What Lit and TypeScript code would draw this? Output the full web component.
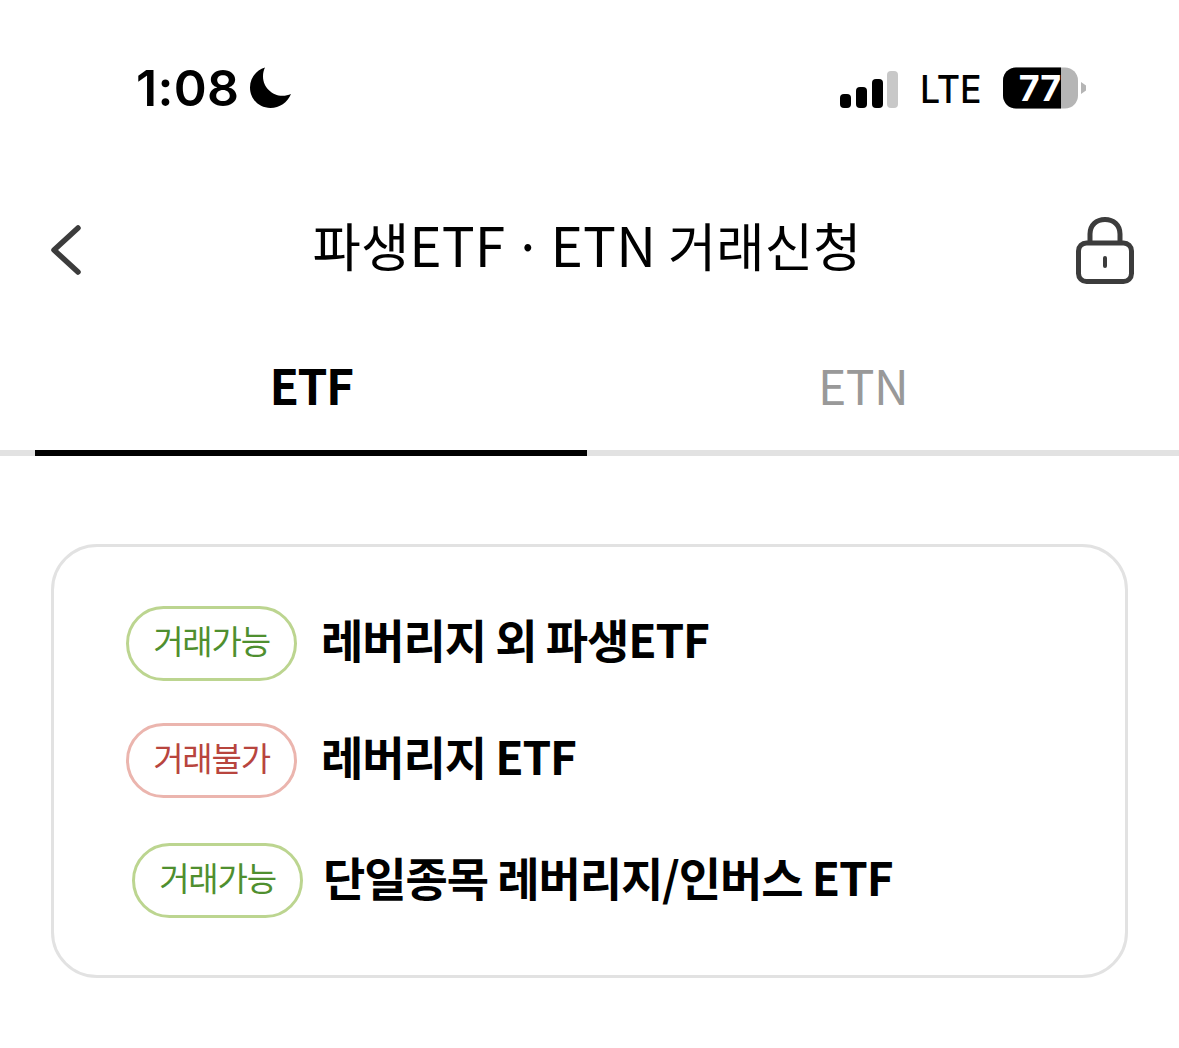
// app.ts
// Derivative ETF / ETN trading permission screen

import { LitElement, html, css } from "lit";

const rows = [
  { ok: true, label: "레버리지 외 파생ETF", shifted: false },
  { ok: false, label: "레버리지 ETF", shifted: false },
  { ok: true, label: "단일종목 레버리지/인버스 ETF", shifted: true },
];

export class AppRoot extends LitElement {
  static styles = css`
    :host {
      display: block;
      width: 1179px;
      height: 1048px;
      background: #fff;
      color: #000;
      font-family: "Noto Sans CJK KR", "Noto Sans", sans-serif;
      overflow: hidden;
    }

    .status {
      height: 176px;
      box-sizing: border-box;
      padding: 60px 92px 0 136px;
      display: flex;
      align-items: flex-start;
      justify-content: space-between;
    }

    .time {
      display: flex;
      align-items: center;
      gap: 11px;
      height: 56px;
      font-family: Inter, sans-serif;
      font-size: 50px;
      font-weight: 600;
      letter-spacing: 0.3px;
    }

    .indicators {
      display: flex;
      align-items: center;
      height: 56px;
    }

    .signal {
      margin-top: 1px;
    }

    .lte {
      margin: 2px 19px 0 20px;
      font-family: Inter, sans-serif;
      font-size: 38px;
      font-weight: 500;
      transform: scaleX(0.94);
    }

    .battery {
      position: relative;
      width: 84px;
      height: 42px;
    }

    .battery span {
      position: absolute;
      left: 0;
      width: 74px;
      top: 3px;
      text-align: center;
      color: #fff;
      font-family: Inter, sans-serif;
      font-size: 36px;
      line-height: 36px;
      font-weight: 700;
    }

    .title-bar {
      height: 140px;
      box-sizing: border-box;
      padding: 0 45px 0 50px;
      display: flex;
      align-items: center;
    }

    .back {
      margin-top: 7px;
      flex: none;
    }

    .lock {
      margin-top: 8px;
      flex: none;
    }

    .title {
      flex: 1;
      margin-left: 16px;
      text-align: center;
      font-size: 52.5px;
      font-weight: 400;
      letter-spacing: 0.1px;
      line-height: 70px;
      margin-top: -5px;
    }

    .title .lat {
      font-size: 55px;
    }

    .title .dot {
      margin: 0 -4px;
    }

    .tabs {
      display: flex;
      height: 140px;
      box-sizing: border-box;
      padding: 0 40px 0 35px;
      border-bottom: 6px solid #e2e2e2;
    }

    .tab {
      flex: 1;
      display: flex;
      align-items: center;
      justify-content: center;
      margin-bottom: -6px;
      border-bottom: 6px solid transparent;
      font-size: 48px;
      color: #999;
      letter-spacing: -0.5px;
      line-height: 60px;
      padding-top: 2px;
      box-sizing: border-box;
    }

    .tab.on {
      color: #000;
      font-weight: 700;
      letter-spacing: -1.5px;
      border-bottom-color: #000;
    }

    .card {
      margin: 88px 51px 0 51px;
      height: 434px;
      box-sizing: border-box;
      border: 3px solid #e2e2e2;
      border-radius: 46px;
      padding: 59px 0 0 72px;
      display: flex;
      flex-direction: column;
    }

    .row {
      display: flex;
      align-items: center;
      gap: 24px;
      height: 75px;
      margin-bottom: 42px;
    }

    .row.shifted {
      margin: 3px 0 0 6px;
      gap: 20px;
    }

    .pill {
      width: 171px;
      height: 75px;
      box-sizing: border-box;
      border-radius: 38px;
      border: 3px solid #bcd590;
      padding-bottom: 7px;
      color: #4f8f2f;
      font-size: 33px;
      letter-spacing: -1.2px;
      display: flex;
      align-items: center;
      justify-content: center;
      flex: none;
    }

    .pill.no {
      border-color: #ebb5ae;
      color: #b8453e;
    }

    .label {
      font-size: 46px;
      font-weight: 700;
      letter-spacing: -1.1px;
      line-height: 60px;
      margin-bottom: 11px;
    }

    .row.shifted .label {
      margin-bottom: 9px;
    }
  `;

  render() {
    return html`
      <div class="status">
        <div class="time">
          1:08
          <svg width="42" height="42" viewBox="0 0 42 42">
            <path
              d="M15 0.5C5.5 3.5 0 11.5 0 20.5C0 32 9 41 20.5 41C29.5 41 37.5 35.5 41 27C38.5 28.2 35.5 28.8 32.5 28.8C22 28.8 13 20 13 9.5C13 6.3 13.7 3.2 15 0.5Z"
              fill="#000"
            />
          </svg>
        </div>
        <div class="indicators">
          <svg class="signal" width="58" height="38" viewBox="0 0 58 38">
            <rect x="0" y="24" width="11" height="14" rx="4" fill="#000" />
            <rect x="16" y="17" width="11" height="21" rx="4" fill="#000" />
            <rect x="32" y="9" width="11" height="29" rx="4" fill="#000" />
            <rect x="47" y="1" width="11" height="37" rx="4" fill="#c8c8c8" />
          </svg>
          <span class="lte">LTE</span>
          <div class="battery">
            <svg width="84" height="42" viewBox="0 0 84 42">
              <defs>
                <clipPath id="batt"><rect width="75" height="41" y="0.5" rx="13" /></clipPath>
              </defs>
              <g clip-path="url(#batt)">
                <rect width="75" height="42" fill="#b5b5b5" />
                <rect width="58" height="42" fill="#000" />
              </g>
              <path d="M78 15L83 18.5V23.5L78 27Z" fill="#b5b5b5" />
            </svg>
            <span>77</span>
          </div>
        </div>
      </div>

      <div class="title-bar">
        <svg class="back" width="32" height="52" viewBox="0 0 32 52" fill="none">
          <path
            d="M28 4L4 26L28 48"
            stroke="#3c3c3c"
            stroke-width="5.5"
            stroke-linecap="round"
            stroke-linejoin="round"
          />
        </svg>
        <div class="title">파생<span class="lat">ETF</span><span class="dot"> · </span><span class="lat">ETN</span> 거래신청</div>
        <svg class="lock" width="58" height="67" viewBox="0 0 58 67" fill="none">
          <rect x="2.5" y="26" width="53" height="38.5" rx="8" stroke="#3c3c3c" stroke-width="5" />
          <path d="M14 26V17C14 8 20.5 2.5 29 2.5C37.5 2.5 44 8 44 17V26" stroke="#3c3c3c" stroke-width="5" />
          <path d="M29 41V49" stroke="#3c3c3c" stroke-width="4" stroke-linecap="round" />
        </svg>
      </div>

      <div class="tabs">
        <div class="tab on">ETF</div>
        <div class="tab">ETN</div>
      </div>

      <div class="card">
        ${rows.map(
          (r) => html`
            <div class="row ${r.shifted ? "shifted" : ""}">
              <span class="pill ${r.ok ? "" : "no"}">${r.ok ? "거래가능" : "거래불가"}</span>
              <span class="label">${r.label}</span>
            </div>
          `
        )}
      </div>
    `;
  }
}

customElements.define("app-root", AppRoot);
